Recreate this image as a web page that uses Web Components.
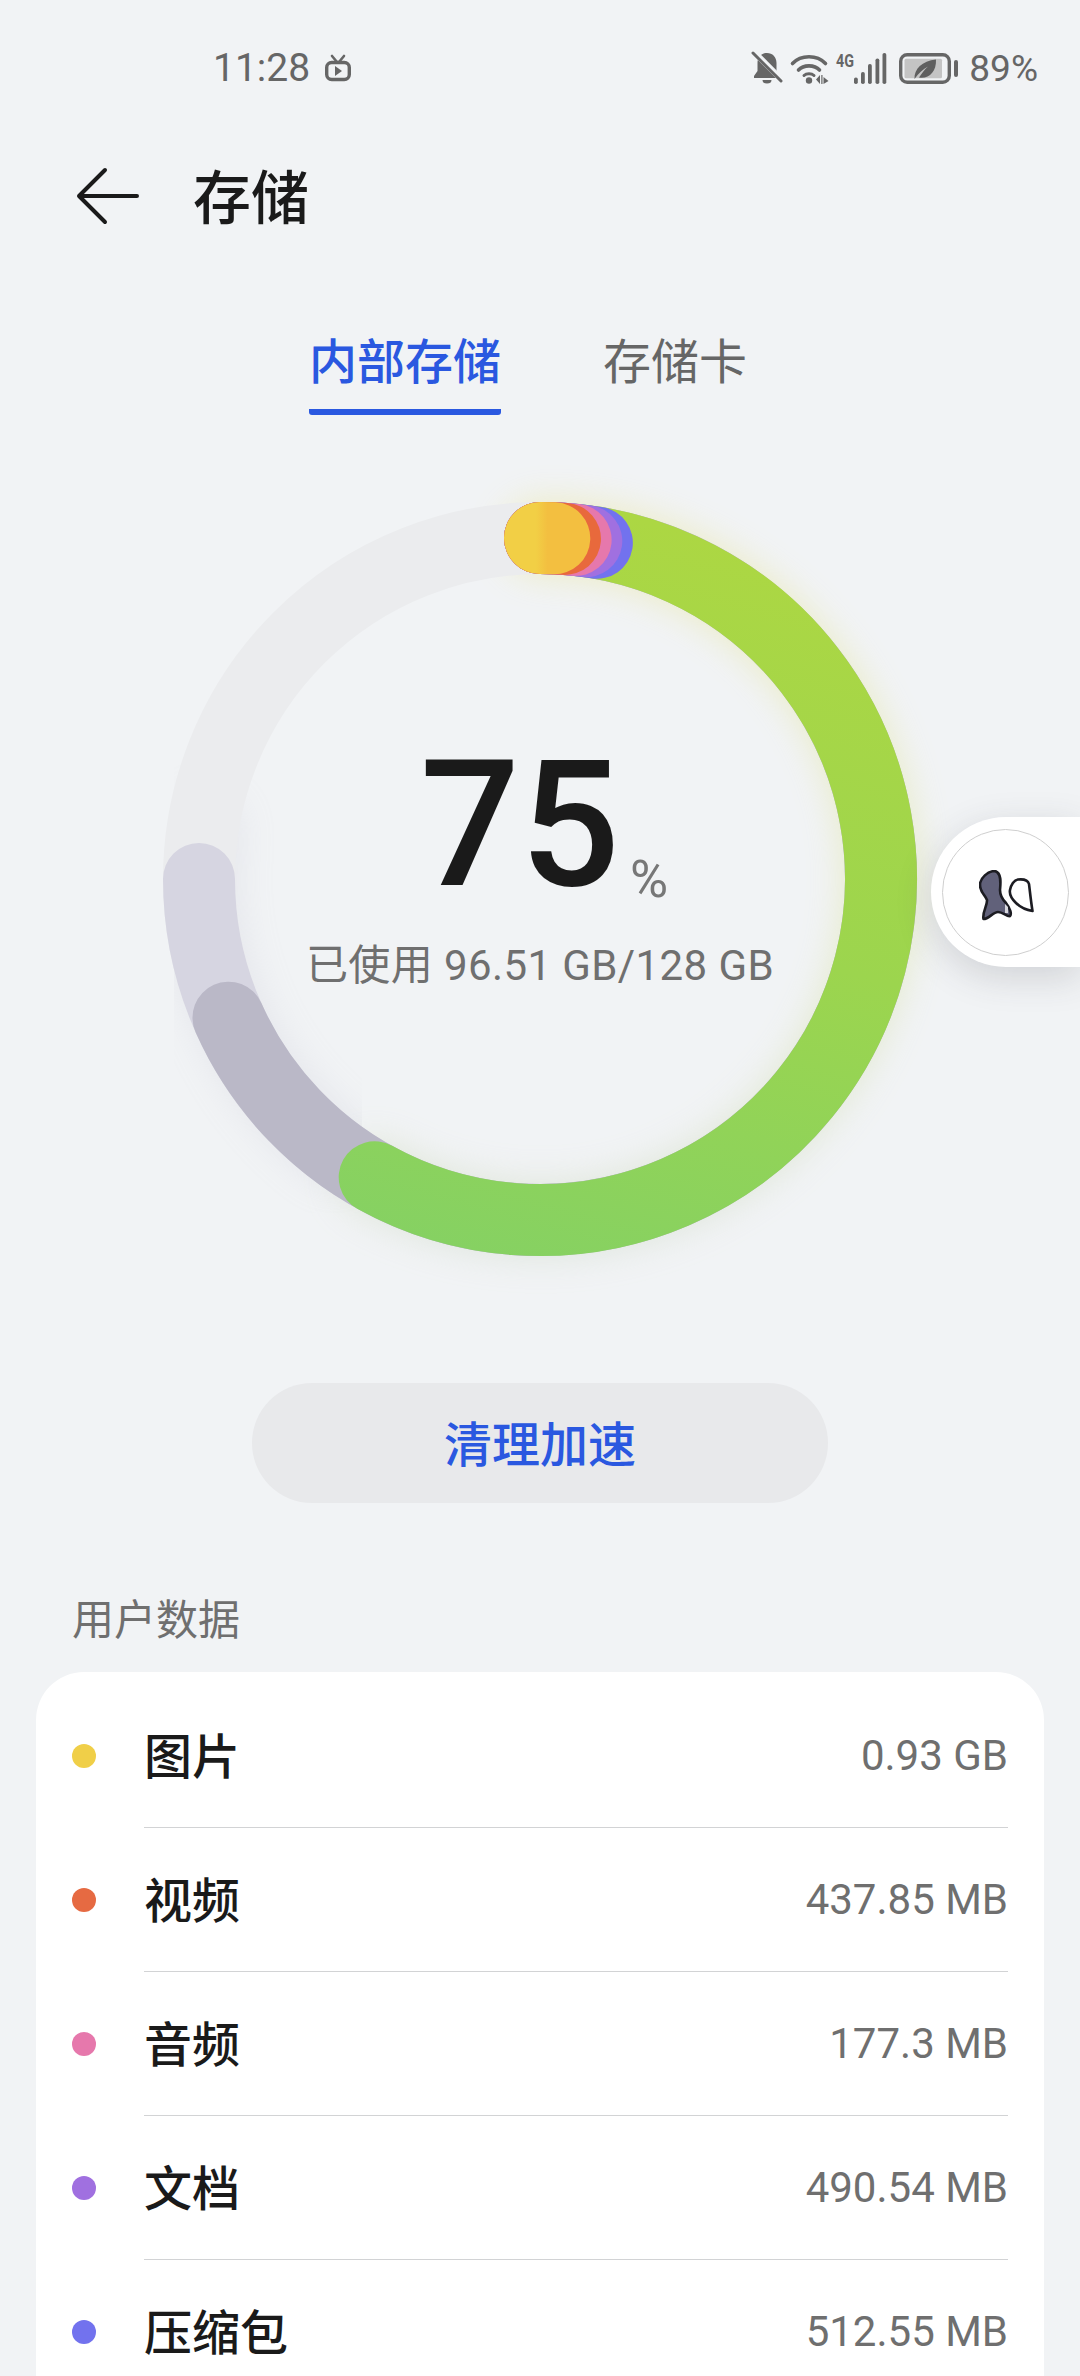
<!DOCTYPE html>
<html lang="zh">
<head>
<meta charset="utf-8">
<title>存储</title>
<style>
  html, body { margin: 0; padding: 0; height: 2376px; overflow: hidden; }
  body {
    background: #f1f3f5;
    font-family: Roboto, "Noto Sans CJK SC", sans-serif;
    position: relative;
  }
</style>
</head>
<body>
<status-bar></status-bar>
<app-header>存储</app-header>
<storage-tabs></storage-tabs>
<storage-ring></storage-ring>
<clean-button>清理加速</clean-button>
<data-list label="用户数据">
  <data-row color="#f0cf48"><span slot="name">图片</span><span slot="size">0.93 GB</span></data-row>
  <data-row color="#e66a42"><span slot="name">视频</span><span slot="size">437.85 MB</span></data-row>
  <data-row color="#e678ac"><span slot="name">音频</span><span slot="size">177.3 MB</span></data-row>
  <data-row color="#a070e0"><span slot="name">文档</span><span slot="size">490.54 MB</span></data-row>
  <data-row color="#7272ee"><span slot="name">压缩包</span><span slot="size">512.55 MB</span></data-row>
</data-list>
<float-ball></float-ball>

<script>
class StatusBar extends HTMLElement {
  constructor() {
    super();
    this.attachShadow({ mode: 'open' });
  }

  connectedCallback() {
    this.shadowRoot.innerHTML = `
      <style>
        :host {
          display: flex;
          align-items: center;
          height: 136px;
          padding: 0 42px 0 213px;
          box-sizing: border-box;
          color: #666;
          font-size: 39px;
        }
        .left { display: flex; align-items: center; gap: 15px; flex: 1; }
        .right { display: flex; align-items: center; }
        svg { display: block; overflow: visible; }
        .pct { margin-left: 11px; font-size: 37px; }
      </style>
      <div class="left">
        <span>11:28</span>
        <svg width="26" height="26" viewBox="0 0 26 26">
          <rect x="1.700" y="7.500" width="22.600" height="17" rx="5" fill="none" stroke="#666" stroke-width="3.400"/>
          <path d="M7 1l5 6M19 1l-5 6" stroke="#666" stroke-width="2.600" stroke-linecap="round"/>
          <path d="M10 11l7 5-7 5z" fill="#666"/>
        </svg>
      </div>
      <div class="right">
        <svg width="30" height="32" viewBox="0 0 30 32">
          <path d="M15 1c-5.500 0-9.500 4-9.500 10v8L2 24v2h26v-2l-3.500-5v-8c0-6-4-10-9.500-10z" fill="#666"/>
          <path d="M10.500 28h9a4.500 3.500 0 0 1-9 0z" fill="#666"/>
          <path d="M1 -1l30 30" stroke="#f1f3f5" stroke-width="6"/>
          <path d="M1 1l28 28" stroke="#666" stroke-width="3" stroke-linecap="round"/>
        </svg>
        <svg style="margin-left:9px" width="38" height="31" viewBox="0 0 38 31">
          <path d="M1.500 10.500C10 1.500 26 1.500 34.500 10.500" fill="none" stroke="#666" stroke-width="3.600" stroke-linecap="round"/>
          <path d="M7.500 17C12.500 11.500 23.500 11.500 28.500 17" fill="none" stroke="#666" stroke-width="3.600" stroke-linecap="round"/>
          <path d="M13 22.500C15.500 20 20.500 20 23 22.500" fill="none" stroke="#666" stroke-width="3" stroke-linecap="round"/>
          <circle cx="18" cy="27.500" r="3.200" fill="#666"/>
          <path d="M29 22v9l-4-4.500zM31.500 22v9h-1.200v-9zM32.500 24l5 4-5 3z" fill="#666"/>
        </svg>
        <svg style="margin-left:7px" width="50" height="31" viewBox="0 0 50 31">
          <text x="0" y="14" font-size="18" font-weight="700" fill="#666" font-family="Roboto, sans-serif" textLength="18" lengthAdjust="spacingAndGlyphs">4G</text>
          <rect x="18" y="24.500" width="3.800" height="6.500" rx="1.800" fill="#666"/>
          <rect x="25" y="19" width="3.800" height="12" rx="1.800" fill="#666"/>
          <rect x="32" y="11" width="3.800" height="20" rx="1.800" fill="#666"/>
          <rect x="39.500" y="5.500" width="3.800" height="25.500" rx="1.800" fill="#666"/>
          <rect x="46.500" y="0" width="3.800" height="31" rx="1.800" fill="#666"/>
        </svg>
        <svg style="margin-left:13px" width="59" height="31" viewBox="0 0 59 31">
          <rect x="1.700" y="1.700" width="48.600" height="27.600" rx="6.500" fill="none" stroke="#666" stroke-width="3.400"/>
          <rect x="5.500" y="5.700" width="37.500" height="19.500" rx="1.500" fill="#c4c4c4"/>
          <path d="M15.500 26C15 16 23 8 37 6.500C37.500 19 30 26 20 24.500C23 20 25 17 29 13.500C24 16 20 20 15.500 26z" fill="#5f5f5f"/>
          <rect x="55" y="7" width="4" height="17" rx="2" fill="#666"/>
        </svg>
        <span class="pct">89%</span>
      </div>
    `;
  }
}

class AppHeader extends HTMLElement {
  constructor() {
    super();
    this.attachShadow({ mode: 'open' });
  }

  connectedCallback() {
    this.shadowRoot.innerHTML = `
      <style>
        :host {
          display: flex;
          align-items: center;
          gap: 55px;
          height: 120px;
          padding-left: 78px;
          color: #1a1a1a;
          font-size: 58px;
          font-weight: 500;
        }
        svg { display: block; overflow: visible; }
        .title { padding-bottom: 4px; }
      </style>
      <svg width="60" height="56" viewBox="0 0 60 56">
        <path d="M27 2L1 28l26 26M1 28h58" fill="none" stroke="#1a1a1a" stroke-width="4" stroke-linecap="round" stroke-linejoin="round"/>
      </svg>
      <div class="title"><slot></slot></div>
    `;
  }
}

class StorageTabs extends HTMLElement {
  constructor() {
    super();
    this.attachShadow({ mode: 'open' });
  }

  connectedCallback() {
    this.shadowRoot.innerHTML = `
      <style>
        :host {
          display: flex;
          height: 223px;
          padding: 72px 0 0 309px;
          box-sizing: border-box;
          gap: 102px;
          font-size: 48px;
          line-height: 70px;
          color: #666;
        }
        .tab { height: 87px; box-sizing: border-box; }
        .on {
          color: #2a58e0;
          font-weight: 500;
          width: 192px;
          text-align: center;
          border-bottom: 6px solid #2a58e0;
          border-radius: 0 0 3px 3px;
        }
      </style>
      <div class="tab on">内部存储</div>
      <div class="tab">存储卡</div>
    `;
  }
}

class StorageRing extends HTMLElement {
  constructor() {
    super();
    this.attachShadow({ mode: 'open' });
  }

  // clockwise arc from the top of the ring, deg is the end angle
  arc(deg) {
    const r = 341;
    const a = deg * Math.PI / 180;
    const x = (400 + r * Math.sin(a)).toFixed(2);
    const y = (400 - r * Math.cos(a)).toFixed(2);
    return `M400 ${400 - r}A${r} ${r} 0 ${deg > 180 ? 1 : 0} 1 ${x} ${y}`;
  }

  connectedCallback() {
    const caps = [
      [9.6, '#7272ee'],
      [7.8, '#a070e0'],
      [6.0, '#e678ac'],
      [4.2, '#e8693c'],
    ];
    this.shadowRoot.innerHTML = `
      <style>
        :host {
          display: grid;
          justify-items: center;
          height: 800px;
        }
        svg, .center { grid-area: 1 / 1; }
        svg { display: block; overflow: visible; }
        path { fill: none; stroke-width: 72; stroke-linecap: round; }
        .center {
          display: flex;
          flex-direction: column;
          align-items: center;
          padding-top: 233px;
          color: #6f6f6f;
          font-size: 42px;
        }
        .num {
          display: flex;
          align-items: baseline;
          margin-left: 8px;
          height: 226px;
          color: #1a1a1a;
          font-size: 176px;
          line-height: 226px;
          font-weight: 500;
        }
        .num span {
          margin-left: 10px;
          font-size: 52px;
          font-weight: 400;
          color: #777;
          transform: translateY(12px);
        }
        .used { line-height: 56px; letter-spacing: 0.4px; }
      </style>
      <svg width="800" height="800" viewBox="0 0 800 800">
        <defs>
          <linearGradient id="green" gradientUnits="userSpaceOnUse" x1="500" y1="40" x2="300" y2="780">
            <stop offset="0" stop-color="#acd743"/>
            <stop offset="0.5" stop-color="#9cd54e"/>
            <stop offset="1" stop-color="#85d163"/>
          </linearGradient>
          <linearGradient id="glow" gradientUnits="userSpaceOnUse" x1="0" y1="40" x2="0" y2="780">
            <stop offset="0" stop-color="#e4dc5c"/>
            <stop offset="0.55" stop-color="#d0dc70"/>
            <stop offset="1" stop-color="#b8c8b0"/>
          </linearGradient>
          <linearGradient id="yellow" gradientUnits="userSpaceOnUse" x1="364" y1="0" x2="432" y2="0">
            <stop offset="0.47" stop-color="#f2cf45"/>
            <stop offset="0.64" stop-color="#f3bf40"/>
          </linearGradient>
          <filter id="soft" x="-20%" y="-20%" width="140%" height="140%">
            <feGaussianBlur stdDeviation="18"/>
          </filter>
        </defs>
        <path d="${this.arc(209)}" stroke="url(#glow)" opacity="0.34" filter="url(#soft)"/>
        <path d="M65 350A340 340 0 0 0 195 670" stroke="#b6b5c6" opacity="0.22" filter="url(#soft)"/>
        <circle cx="400" cy="400" r="341" fill="none" stroke="#ebecee" stroke-width="72"/>
        <path d="${this.arc(270)}" stroke="#d6d5e1"/>
        <path d="${this.arc(246)}" stroke="#bab8c7"/>
        <path d="${this.arc(209)}" stroke="url(#green)"/>
        ${caps.map(([deg, color]) => `<path d="${this.arc(deg)}" stroke="${color}"/>`).join('')}
        <path d="${this.arc(2.4)}" stroke="url(#yellow)"/>
      </svg>
      <div class="center">
        <div class="num">75<span>%</span></div>
        <div class="used">已使用 96.51 GB/128 GB</div>
      </div>
    `;
  }
}

class CleanButton extends HTMLElement {
  constructor() {
    super();
    this.attachShadow({ mode: 'open' });
  }

  connectedCallback() {
    this.shadowRoot.innerHTML = `
      <style>
        :host {
          display: flex;
          align-items: center;
          justify-content: center;
          width: 576px;
          height: 120px;
          margin: 104px auto 0;
          padding-bottom: 4px;
          box-sizing: border-box;
          border-radius: 60px;
          background: #e8e9eb;
          color: #2a58e0;
          font-size: 48px;
          font-weight: 500;
        }
      </style>
      <slot></slot>
    `;
  }
}

class DataList extends HTMLElement {
  constructor() {
    super();
    this.attachShadow({ mode: 'open' });
  }

  connectedCallback() {
    this.shadowRoot.innerHTML = `
      <style>
        :host { display: block; margin-top: 92px; }
        .label {
          height: 77px;
          padding-left: 72px;
          color: #6f6f6f;
          font-size: 42px;
          line-height: 52px;
        }
        .card {
          margin: 0 36px;
          padding-top: 12px;
          background: #fff;
          border-radius: 48px 48px 0 0;
        }
      </style>
      <div class="label">${this.getAttribute('label')}</div>
      <div class="card"><slot></slot></div>
    `;
  }
}

class DataRow extends HTMLElement {
  constructor() {
    super();
    this.attachShadow({ mode: 'open' });
  }

  connectedCallback() {
    this.shadowRoot.innerHTML = `
      <style>
        :host {
          display: flex;
          align-items: center;
          height: 144px;
          padding: 0 36px;
        }
        .dot {
          width: 24px;
          height: 24px;
          border-radius: 50%;
          margin-right: 48px;
          background: ${this.getAttribute('color')};
        }
        .body {
          flex: 1;
          display: flex;
          align-items: center;
          justify-content: space-between;
          height: 100%;
          border-bottom: 1px solid #d2d3d5;
          box-sizing: border-box;
        }
        .name { color: #1a1a1a; font-size: 48px; font-weight: 500; padding-bottom: 5px; }
        .size { color: #6f6f6f; font-size: 42px; }
      </style>
      <div class="dot"></div>
      <div class="body">
        <div class="name"><slot name="name"></slot></div>
        <div class="size"><slot name="size"></slot></div>
      </div>
    `;
  }
}

class FloatBall extends HTMLElement {
  constructor() {
    super();
    this.attachShadow({ mode: 'open' });
  }

  connectedCallback() {
    this.shadowRoot.innerHTML = `
      <style>
        :host {
          position: absolute;
          left: 931px;
          top: 817px;
          width: 149px;
          height: 150px;
          display: flex;
          align-items: center;
          padding-left: 11px;
          box-sizing: border-box;
          background: #fff;
          border-radius: 75px 0 0 75px;
          box-shadow: 0 10px 36px rgba(60, 60, 70, 0.18);
        }
        .ring {
          width: 127px;
          height: 127px;
          box-sizing: border-box;
          border: 1px solid #cfcfcf;
          border-radius: 50%;
          display: flex;
          align-items: center;
          justify-content: center;
        }
        svg { display: block; margin: 8px 0 0 3px; }
      </style>
      <div class="ring">
        <svg width="56" height="52" viewBox="0 0 56 52">
          <path d="M16 1C9 1 1 8 1 15C1 22 6 25 8 30C8.500 36 3 42 4.500 49C10 49 14 42 19 42C24 42 28 47 31 46C33 44 31 38 27 33C23 29 21 25 21 20C21.500 14 23 3 16 1z" fill="#61617a" stroke="#1c1c22" stroke-width="2.600" stroke-linejoin="round"/>
          <path d="M31 20C32 15 35 10 39 9.500C44 9 49 10 50 14C51 22 52 32 53.500 41C47 40 41 37 37 33C33 29 30 25 31 20z" fill="#fff" stroke="#1c1c22" stroke-width="2.600" stroke-linejoin="round"/>
          <path d="M26 34l3 3 0 6-3 0z" fill="#d8d8de"/>
        </svg>
      </div>
    `;
  }
}

customElements.define('status-bar', StatusBar);
customElements.define('app-header', AppHeader);
customElements.define('storage-tabs', StorageTabs);
customElements.define('storage-ring', StorageRing);
customElements.define('clean-button', CleanButton);
customElements.define('data-list', DataList);
customElements.define('data-row', DataRow);
customElements.define('float-ball', FloatBall);
</script>
</body>
</html>
